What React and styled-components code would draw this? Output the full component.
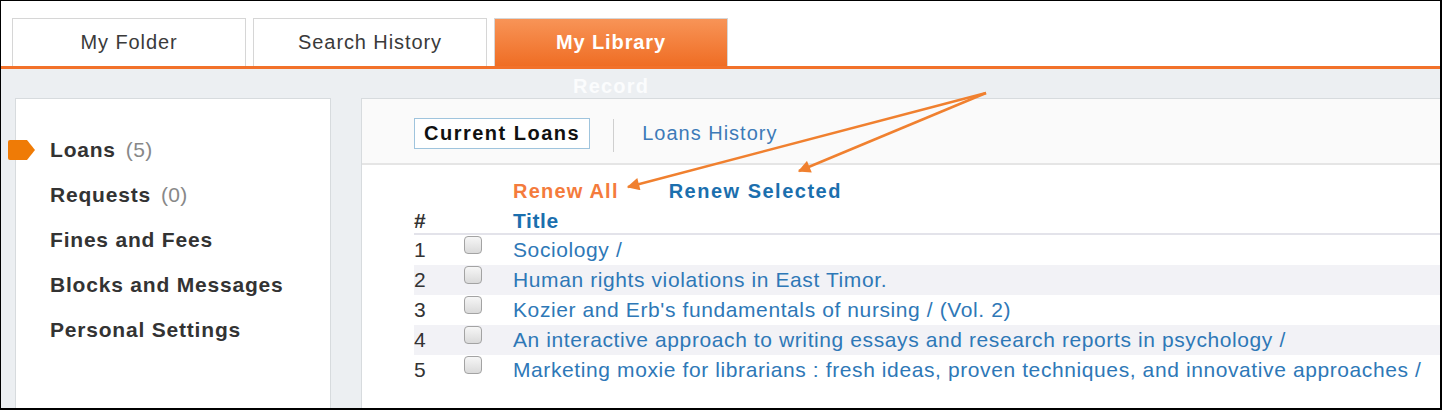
import React from 'react'
import styled, { createGlobalStyle } from 'styled-components'

const GlobalStyle = createGlobalStyle`
    html, body {
        margin: 0;
        padding: 0;
        background: #fff;
    }
    body {
        font-family: "Liberation Sans", Arial, sans-serif;
    }
`

const Frame = styled.div`
    position: relative;
    width: 1442px;
    height: 410px;
    box-sizing: border-box;
    border-style: solid;
    border-color: #000;
    border-width: 1px 2px 2px 1px;
    background: #fff;
    overflow: hidden;
    display: flex;
    flex-direction: column;
`

const TabBar = styled.div`
    display: flex;
    gap: 7px;
    padding: 17px 0 0 11px;
    border-bottom: 3px solid #f2712a;
`

const Tab = styled.div`
    width: 234px;
    height: 48px;
    box-sizing: border-box;
    border: 1px solid #d6d6d6;
    border-bottom: none;
    display: flex;
    align-items: center;
    justify-content: center;
    font-size: 20px;
    letter-spacing: 0.9px;
    background: ${p => (p.$active ? 'linear-gradient(#f89457, #ef6d24)' : '#fff')};
    color: ${p => (p.$active ? '#fff' : '#3a3a3a')};
    font-weight: ${p => (p.$active ? 'bold' : 'normal')};
`

const Body = styled.div`
    flex: 1;
    background: #eceff2;
    display: flex;
    flex-direction: column;
`

const Heading = styled.div`
    height: 29px;
    box-sizing: border-box;
    padding: 4px 0 0 572px;
    font-size: 20px;
    font-weight: bold;
    letter-spacing: 1.2px;
    color: #fbfcfd;
    line-height: 26px;
`

const Columns = styled.div`
    flex: 1;
    display: flex;
    gap: 30px;
    padding-left: 14px;
`

const Sidebar = styled.ul`
    flex-shrink: 0;
    width: 316px;
    box-sizing: border-box;
    margin: 0;
    padding: 28px 0 0 34px;
    list-style: none;
    background: #fff;
    border: 1px solid #d7dbde;
    border-bottom: none;
`

const NavItem = styled.li`
    position: relative;
    height: 45px;
    line-height: 45px;
    font-size: 21px;
    font-weight: bold;
    letter-spacing: 0.8px;
    color: #333;
`

const Count = styled.span`
    margin-left: 10px;
    font-weight: normal;
    color: #888;
    letter-spacing: 0.3px;
`

const Marker = styled.svg`
    position: absolute;
    left: -43px;
    top: 12px;
`

const Main = styled.div`
    flex-shrink: 0;
    width: 1200px;
    background: #fff;
    border: 1px solid #d7dbde;
    border-bottom: none;
    display: flex;
    flex-direction: column;
`

const SubNav = styled.div`
    height: 66px;
    box-sizing: border-box;
    padding: 19px 0 0 52px;
    background: #fafafa;
    border-bottom: 2px solid #e5e5e5;
    display: flex;
    align-items: flex-start;
`

const SubTab = styled.div`
    height: 31px;
    box-sizing: border-box;
    padding: 0 9px;
    display: flex;
    align-items: center;
    font-size: 20px;
    letter-spacing: ${p => (p.$current ? '1.5px' : '1px')};
    font-weight: ${p => (p.$current ? 'bold' : 'normal')};
    color: ${p => (p.$current ? '#111' : '#3d7ab8')};
    border: 1px solid ${p => (p.$current ? '#9fc4dd' : 'transparent')};
    background: ${p => (p.$current ? '#fff' : 'transparent')};
`

const Divider = styled.div`
    width: 1px;
    height: 33px;
    margin: 1px 18px 0 23px;
    background: #cfcfcf;
`

const Loans = styled.div`
    padding: 11px 0 0 52px;
    display: flex;
    flex-direction: column;
`

const Actions = styled.div`
    height: 30px;
    display: flex;
    align-items: center;
    gap: 50px;
    padding-left: 99px;
`

const Action = styled.span`
    font-size: 20px;
    font-weight: bold;
    letter-spacing: ${p => (p.$all ? '1.2px' : '1.5px')};
    color: ${p => (p.$all ? '#f47b3c' : '#1b6fae')};
`

const Row = styled.div`
    display: grid;
    grid-template-columns: 50px 49px 1fr;
    align-items: ${p => (p.$head ? 'end' : 'center')};
    height: ${p => (p.$head ? '27px' : '30px')};
    font-size: 21px;
    letter-spacing: 0.6px;
    line-height: 24px;
    background: ${p => (p.$striped ? '#f2f2f6' : 'transparent')};
    border-bottom: ${p => (p.$head ? '2px solid #e3e3ea' : 'none')};
    font-weight: ${p => (p.$head ? 'bold' : 'normal')};
`

const Num = styled.span`
    color: #333;
`

const HeadTitle = styled.span`
    color: #1b6fae;
`

const Title = styled.span`
    color: #2e78b7;
    white-space: nowrap;
`

const Check = styled.span`
    align-self: start;
    margin-top: 1px;
    width: 18px;
    height: 18px;
    box-sizing: border-box;
    border: 1px solid #a3a3a3;
    border-radius: 4px;
    background: linear-gradient(#f6f6f6, #dadada);
`

const Arrows = styled.svg`
    position: absolute;
    left: 0;
    top: 0;
    pointer-events: none;
`

const navItems = [
    { label: 'Loans', count: 5, active: true },
    { label: 'Requests', count: 0 },
    { label: 'Fines and Fees' },
    { label: 'Blocks and Messages' },
    { label: 'Personal Settings' },
]

const loans = [
    'Sociology /',
    'Human rights violations in East Timor.',
    "Kozier and Erb's fundamentals of nursing / (Vol. 2)",
    'An interactive approach to writing essays and research reports in psychology /',
    'Marketing moxie for librarians : fresh ideas, proven techniques, and innovative approaches /',
]

const App = () => {
    return (
        <>
            <GlobalStyle />
            <Frame>
                <TabBar>
                    <Tab>My Folder</Tab>
                    <Tab>Search History</Tab>
                    <Tab $active>My Library</Tab>
                </TabBar>
                <Body>
                    <Heading>Record</Heading>
                    <Columns>
                        <Sidebar>
                            {navItems.map(({ label, count, active }) => (
                                <NavItem key={label}>
                                    {active && (
                                        <Marker width="29" height="22" viewBox="0 0 29 22">
                                            <path
                                                d="M3 1 H20 L28 11 L20 21 H3 Q1 21 1 19 V3 Q1 1 3 1 Z"
                                                fill="#ef7b06"
                                            />
                                        </Marker>
                                    )}
                                    {label}
                                    {count !== undefined && <Count>({count})</Count>}
                                </NavItem>
                            ))}
                        </Sidebar>
                        <Main>
                            <SubNav>
                                <SubTab $current>Current Loans</SubTab>
                                <Divider />
                                <SubTab>Loans History</SubTab>
                            </SubNav>
                            <Loans>
                                <Actions>
                                    <Action $all>Renew All</Action>
                                    <Action>Renew Selected</Action>
                                </Actions>
                                <Row $head>
                                    <Num>#</Num>
                                    <span />
                                    <HeadTitle>Title</HeadTitle>
                                </Row>
                                {loans.map((title, i) => (
                                    <Row key={title} $striped={i % 2 === 1}>
                                        <Num>{i + 1}</Num>
                                        <Check />
                                        <Title>{title}</Title>
                                    </Row>
                                ))}
                            </Loans>
                        </Main>
                    </Columns>
                </Body>
                <Arrows width="1442" height="410" viewBox="0 0 1442 410">
                    <defs>
                        <marker id="head" viewBox="0 0 10 10" refX="9" refY="5" markerWidth="6" markerHeight="5" orient="auto">
                            <path d="M0 0 L10 5 L0 10 Z" fill="#f0802f" />
                        </marker>
                    </defs>
                    <line x1="985" y1="92" x2="627" y2="186" stroke="#f0802f" strokeWidth="2.5" markerEnd="url(#head)" />
                    <line x1="985" y1="92" x2="798" y2="170" stroke="#f0802f" strokeWidth="2.5" markerEnd="url(#head)" />
                </Arrows>
            </Frame>
        </>
    )
}

export default App
